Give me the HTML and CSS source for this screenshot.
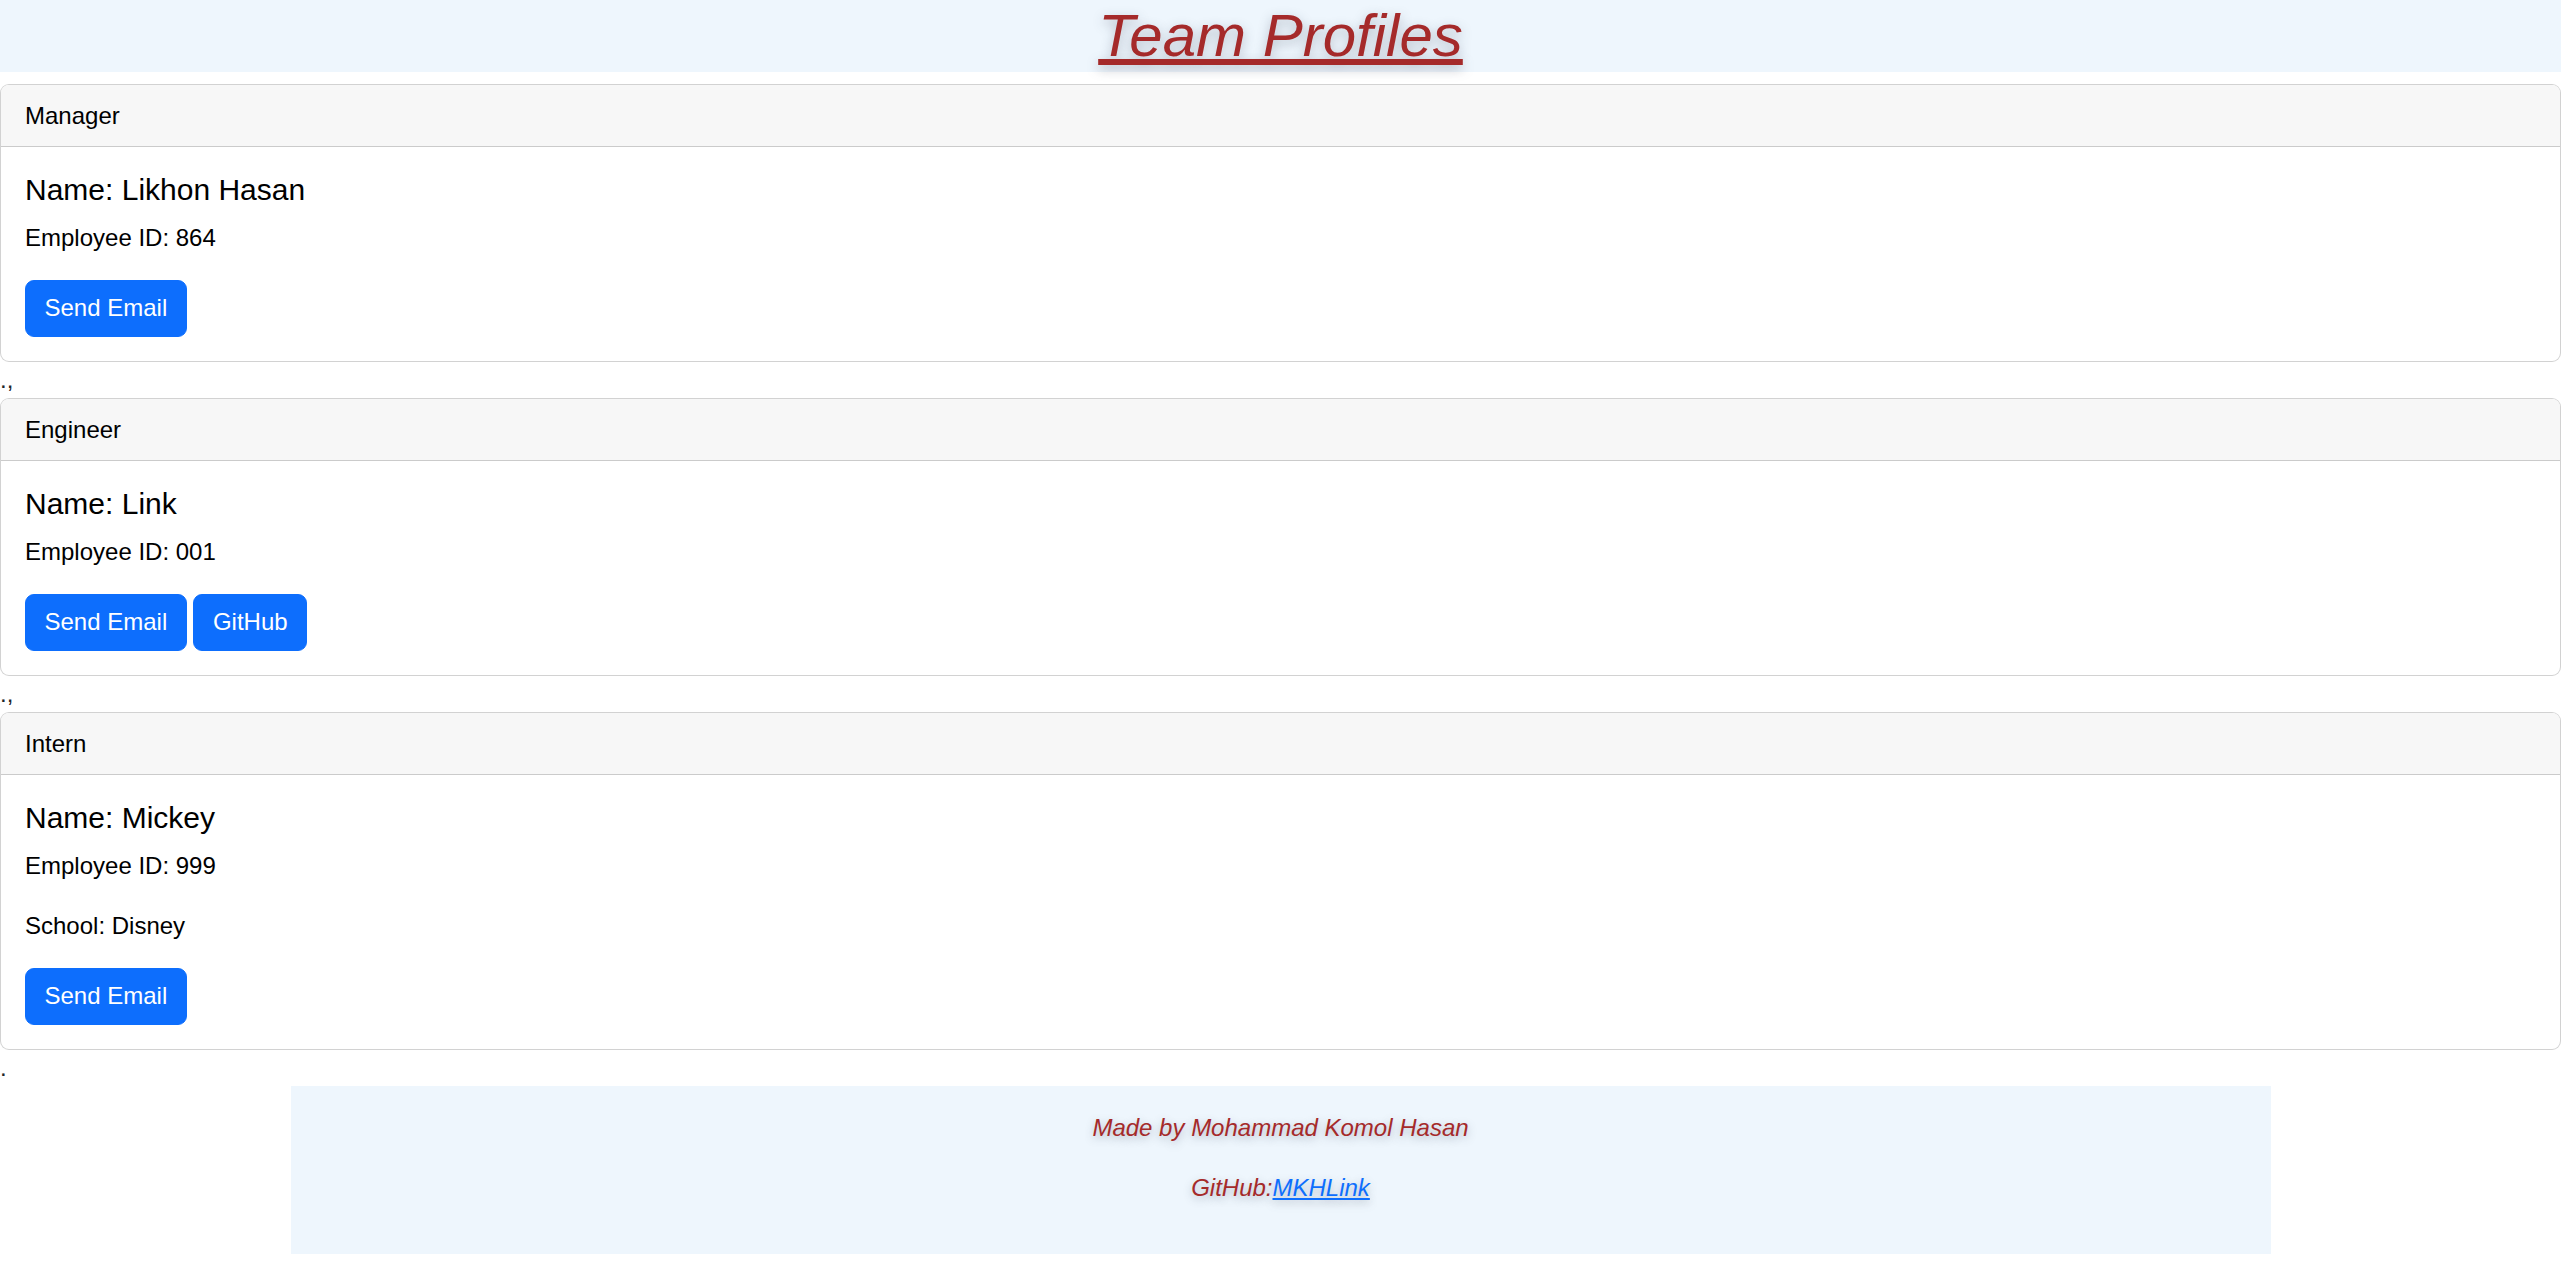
FILE: index.html
```html
<!DOCTYPE html>
<html lang="en">
<head>
<meta charset="utf-8">
<title>Team Profiles</title>
<link rel="stylesheet" href="styles.css">
</head>
<body>
<h1 class="page-title">Team Profiles</h1>
<main class="team">
<div class="card">
  <div class="card-header">Manager</div>
  <div class="card-body">
    <h5 class="card-title">Name: Likhon Hasan</h5>
    <p class="card-text">Employee ID: 864</p>
    <a href="#" class="btn">Send Email</a>
  </div>
</div>.,
<div class="card">
  <div class="card-header">Engineer</div>
  <div class="card-body">
    <h5 class="card-title">Name: Link</h5>
    <p class="card-text">Employee ID: 001</p>
    <a href="#" class="btn">Send Email</a> <a href="#" class="btn">GitHub</a>
  </div>
</div>.,
<div class="card">
  <div class="card-header">Intern</div>
  <div class="card-body">
    <h5 class="card-title">Name: Mickey</h5>
    <p class="card-text">Employee ID: 999</p>
    <p class="card-text">School: Disney</p>
    <a href="#" class="btn">Send Email</a>
  </div>
</div>.
</main>
<footer class="footer">
  <p class="footer-text">Made by Mohammad Komol Hasan</p>
  <p class="footer-text">GitHub:<a href="#" class="footer-link">MKHLink</a></p>
</footer>
</body>
</html>
```
FILE: styles.css
```css
* {
  box-sizing: border-box;
}

html, body {
  margin: 0;
  padding: 0;
}

body {
  font-family: "Liberation Sans", Arial, sans-serif;
  font-size: 24px;
  line-height: 1.5;
  color: #212529;
  background: #fff;
}

.page-title {
  margin: 0 0 12px;
  background: #eef6fd;
  color: #a52a2a;
  font-size: 60px;
  font-weight: 500;
  font-style: italic;
  line-height: 1.2;
  text-align: center;
  text-decoration: underline;
  text-shadow: 0 4px 12px rgba(60, 70, 90, 0.35);
}

.card {
  border: 1px solid rgba(0, 0, 0, 0.175);
  border-radius: 9px;
  background: #fff;
  overflow: hidden;
}

.card-header {
  padding: 12.5px 24px;
  background: #f7f7f7;
  border-bottom: 1px solid rgba(0, 0, 0, 0.175);
  color: #000;
}

.card-body {
  padding: 24.5px 24px;
}

.card-title {
  margin: 0 0 12px;
  font-size: 30px;
  font-weight: 500;
  line-height: 1.2;
  color: #000;
}

.card-text {
  margin: 0 0 24px;
  color: #000;
}

.btn {
  display: inline-block;
  padding: 9.5px 18.5px;
  border: 1px solid #0d6efd;
  border-radius: 9px;
  background: #0d6efd;
  color: #fff;
  font-size: 24px;
  line-height: 36px;
  text-decoration: none;
  vertical-align: middle;
}

.footer {
  max-width: 1980px;
  margin: 0 auto;
  padding: 24px 18px;
  background: #eef6fd;
  text-align: center;
}

.footer-text {
  margin: 0 0 24px;
  color: #a52a2a;
  font-style: italic;
  text-shadow: 0 3px 8px rgba(60, 70, 90, 0.35);
}

.footer-link {
  color: #0d6efd;
  text-decoration: underline;
}
```
